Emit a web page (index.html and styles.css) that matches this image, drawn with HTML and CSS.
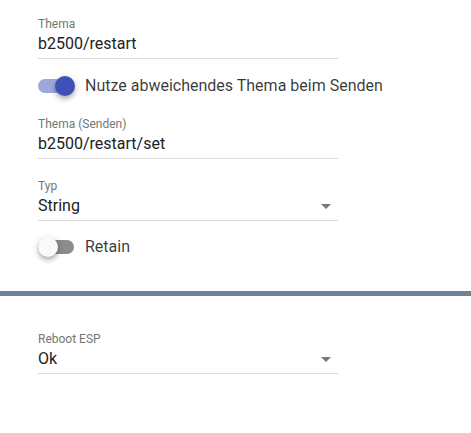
FILE: index.html
```html
<!DOCTYPE html>
<html lang="de">
<head>
<meta charset="utf-8">
<title>Thema</title>
<link rel="stylesheet" href="styles.css">
</head>
<body>
<div class="section section-top">
  <div class="field">
    <div class="label">Thema</div>
    <div class="value">b2500/restart</div>
  </div>
  <div class="switch-row sw1">
    <span class="switch on"><span class="track"></span><span class="thumb"></span></span>
    <span class="switch-label">Nutze abweichendes Thema beim Senden</span>
  </div>
  <div class="field">
    <div class="label">Thema (Senden)</div>
    <div class="value">b2500/restart/set</div>
  </div>
  <div class="field select f3">
    <div class="label">Typ</div>
    <div class="value"><span>String</span><span class="arrow"></span></div>
  </div>
  <div class="switch-row sw2">
    <span class="switch"><span class="track"></span><span class="thumb"></span></span>
    <span class="switch-label">Retain</span>
  </div>
</div>
<div class="divider"></div>
<div class="section section-bottom">
  <div class="field select">
    <div class="label">Reboot ESP</div>
    <div class="value"><span>Ok</span><span class="arrow"></span></div>
  </div>
</div>
</body>
</html>
```
FILE: styles.css
```css
html, body {
  margin: 0;
  padding: 0;
  background: #ffffff;
}
body {
  font-family: Roboto, "Noto Sans", Arial, sans-serif;
  width: 471px;
  height: 433px;
  overflow: hidden;
}
.section {
  padding-left: 38px;
}
.field {
  padding-top: 16px;
  border-bottom: 1px solid #dcdcdc;
  padding-bottom: 4px;
  width: 300px;
}
.label {
  font-size: 12px;
  line-height: 16px;
  color: #757575;
}
.value {
  margin-top: 2px;
  font-size: 16px;
  line-height: 20px;
  color: #212121;
  display: flex;
  align-items: center;
  justify-content: space-between;
}
.f3 {
  margin-top: 3px;
}
.arrow {
  width: 0;
  height: 0;
  border-left: 5px solid transparent;
  border-right: 5px solid transparent;
  border-top: 5px solid #777777;
  margin-right: 7px;
  margin-top: 1px;
}
.switch-row {
  display: flex;
  align-items: center;
  height: 26px;
  white-space: nowrap;
}
.sw1 {
  margin-top: 14px;
  margin-bottom: 1px;
}
.sw2 {
  margin-top: 13px;
}
.switch {
  position: relative;
  width: 36px;
  height: 26px;
  flex: none;
}
.track {
  position: absolute;
  left: 0;
  top: 6px;
  width: 36px;
  height: 14px;
  border-radius: 7px;
  background: #8c8c8c;
}
.thumb {
  position: absolute;
  left: 0;
  top: 3px;
  width: 20px;
  height: 20px;
  border-radius: 50%;
  background: #fafafa;
  box-shadow: 0 2px 4px -1px rgba(0,0,0,0.2), 0 4px 5px 0 rgba(0,0,0,0.14), 0 1px 10px 0 rgba(0,0,0,0.12);
}
.switch.on .track {
  background: #9fa8da;
}
.switch.on .thumb {
  left: 17px;
  background: #3f51b5;
}
.switch-label {
  margin-left: 11px;
  font-size: 16px;
  line-height: 20px;
  color: rgba(0,0,0,0.78);
}
.divider {
  margin-top: 31px;
  height: 5px;
  background: #6e8294;
}
.section-bottom {
  margin-top: 19px;
}
```
